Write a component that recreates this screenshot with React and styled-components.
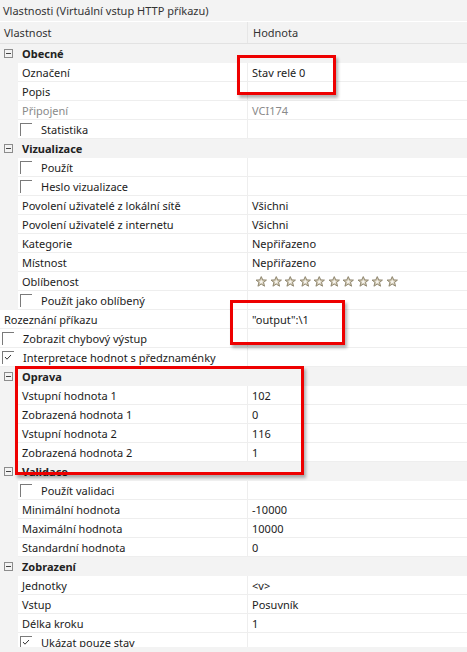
import styled, { createGlobalStyle } from 'styled-components';

const GlobalStyle = createGlobalStyle`
  html, body {
    margin: 0;
    padding: 0;
    background: #f3f3f3;
  }
`;

const NAME_COL = 247;

const Window = styled.div`
  position: relative;
  width: 467px;
  height: 652px;
  overflow: hidden;
  background: #f3f3f3;
  font-family: 'Noto Sans', 'Open Sans', sans-serif;
  font-size: 11px;
  color: #1b1b1b;
`;

const TitleBar = styled.div`
  height: 22px;
  line-height: 22px;
  padding-left: 3px;
  color: #333;
  border-bottom: 1px solid #fff;
  box-sizing: border-box;
`;

const HeaderRow = styled.div`
  display: grid;
  grid-template-columns: ${NAME_COL}px 1fr;
  height: 22px;
  border-bottom: 1px solid #e2e2e2;
  box-sizing: border-box;
  color: #333;
`;

const HeaderCell = styled.div`
  display: flex;
  align-items: center;
  padding-left: ${({ $pad }) => $pad}px;
  border-left: ${({ $divider }) => ($divider ? '1px solid #e6e6e6' : 'none')};
`;

const List = styled.div`
  height: 603px;
  overflow: hidden;
  background: #f3f3f3;
`;

const Row = styled.div`
  display: grid;
  grid-template-columns: ${({ $indent }) => $indent}px ${({ $indent }) => NAME_COL - $indent}px 1fr;
  height: 19px;
`;

const Gutter = styled.div`
  background: #f3f3f3;
`;

const NameCell = styled.div`
  display: flex;
  align-items: center;
  gap: 9px;
  padding-left: ${({ $check }) => ($check ? 2 : 4)}px;
  background: #fff;
  border-bottom: 1px solid #eeeeee;
  color: ${({ $muted }) => ($muted ? '#8a8a8a' : '#1b1b1b')};
  white-space: nowrap;
  overflow: hidden;
`;

const ValueCell = styled.div`
  display: flex;
  align-items: center;
  padding-left: 4px;
  background: #fff;
  border-bottom: 1px solid #eeeeee;
  border-left: 1px solid #eeeeee;
  color: ${({ $muted }) => ($muted ? '#8a8a8a' : '#1b1b1b')};
  white-space: nowrap;
`;

const GroupRow = styled.div`
  display: flex;
  align-items: center;
  height: 19px;
  background: #f3f3f3;
  font-weight: 700;
  color: #222;
`;

const Toggle = styled.span`
  position: relative;
  width: 9px;
  height: 9px;
  margin: 0 9px 0 4px;
  border: 1px solid #8c8c8c;
  box-sizing: border-box;
  &::after {
    content: '';
    position: absolute;
    left: 1px;
    right: 1px;
    top: 3px;
    height: 1px;
    background: #444;
  }
`;

const Box = styled.span`
  display: inline-flex;
  align-items: flex-start;
  justify-content: flex-start;
  width: 12px;
  height: 13px;
  flex: none;
  border-top: 1px solid #7a7a7a;
  border-left: 1px solid #7a7a7a;
  box-sizing: border-box;
`;

const Stars = styled.div`
  display: flex;
  gap: 2px;
  padding-left: 3px;
`;

const Callout = styled.div`
  position: absolute;
  border: 3px solid #ee0000;
  box-shadow: 2px 3px 3px rgba(0, 0, 0, 0.3);
  pointer-events: none;
`;

function Check({ on }) {
  return (
    <Box>
      {on && (
        <svg width="10" height="10" viewBox="0 0 10 10">
          <path d="M2 5 L4 7.2 L8 3" fill="none" stroke="#333" strokeWidth="1" />
        </svg>
      )}
    </Box>
  );
}

function Star() {
  return (
    <svg width="12.5" height="11" viewBox="0 0 12 11">
      <path
        d="M6 0.6 L7.5 3.9 L11.2 4.1 L8.3 6.4 L9.3 10.2 L6 8.1 L2.7 10.2 L3.7 6.4 L0.8 4.1 L4.5 3.9 Z"
        fill="#d2cab4"
        stroke="#8f866f"
        strokeWidth="1"
        strokeLinejoin="round"
      />
      <path d="M6 3.6 L6.8 5.3 L8.2 5.4 L7.1 6.3 L7.5 7.7 L6 6.9 L4.5 7.7 L4.9 6.3 L3.8 5.4 L5.2 5.3 Z" fill="#f6f4ee" />
    </svg>
  );
}

const rows = [
  { group: 'Obecné' },
  { name: 'Označení', value: 'Stav relé 0' },
  { name: 'Popis' },
  { name: 'Připojení', value: 'VCI174', muted: true },
  { name: 'Statistika', check: false },
  { group: 'Vizualizace' },
  { name: 'Použít', check: false },
  { name: 'Heslo vizualizace', check: false },
  { name: 'Povolení uživatelé z lokální sítě', value: 'Všichni' },
  { name: 'Povolení uživatelé z internetu', value: 'Všichni' },
  { name: 'Kategorie', value: 'Nepřiřazeno' },
  { name: 'Místnost', value: 'Nepřiřazeno' },
  { name: 'Oblíbenost', stars: 10 },
  { name: 'Použít jako oblíbený', check: false },
  { name: 'Rozeznání příkazu', value: '"output":\\1', top: true },
  { name: 'Zobrazit chybový výstup', check: false, top: true },
  { name: 'Interpretace hodnot s předznaménky', check: true, top: true },
  { group: 'Oprava' },
  { name: 'Vstupní hodnota 1', value: '102' },
  { name: 'Zobrazená hodnota 1', value: '0' },
  { name: 'Vstupní hodnota 2', value: '116' },
  { name: 'Zobrazená hodnota 2', value: '1' },
  { group: 'Validace' },
  { name: 'Použít validaci', check: false },
  { name: 'Minimální hodnota', value: '-10000' },
  { name: 'Maximální hodnota', value: '10000' },
  { name: 'Standardní hodnota', value: '0' },
  { group: 'Zobrazení' },
  { name: 'Jednotky', value: '<v>' },
  { name: 'Vstup', value: 'Posuvník' },
  { name: 'Délka kroku', value: '1' },
  { name: 'Ukázat pouze stav', check: true },
];

function PropertyRow({ row }) {
  if (row.group) {
    return (
      <GroupRow>
        <Toggle />
        {row.group}
      </GroupRow>
    );
  }
  const hasCheck = row.check !== undefined;
  const indent = row.top ? 0 : 18;
  return (
    <Row $indent={indent}>
      <Gutter />
      <NameCell $check={hasCheck} $muted={row.muted}>
        {hasCheck && <Check on={row.check} />}
        {row.name}
      </NameCell>
      <ValueCell $muted={row.muted}>
        {row.stars ? (
          <Stars>
            {Array.from({ length: row.stars }, (_, i) => (
              <Star key={i} />
            ))}
          </Stars>
        ) : (
          row.value
        )}
      </ValueCell>
    </Row>
  );
}

export default function App() {
  return (
    <Window>
      <GlobalStyle />
      <TitleBar>Vlastnosti (Virtuální vstup HTTP příkazu)</TitleBar>
      <HeaderRow>
        <HeaderCell $pad={4}>Vlastnost</HeaderCell>
        <HeaderCell $pad={5} $divider>
          Hodnota
        </HeaderCell>
      </HeaderRow>
      <List>
        {rows.map((row, i) => (
          <PropertyRow key={i} row={row} />
        ))}
      </List>
      <Callout style={{ left: 237, top: 55, width: 93, height: 34 }} />
      <Callout style={{ left: 230, top: 300, width: 109, height: 39 }} />
      <Callout style={{ left: 15, top: 366, width: 283, height: 103 }} />
    </Window>
  );
}
